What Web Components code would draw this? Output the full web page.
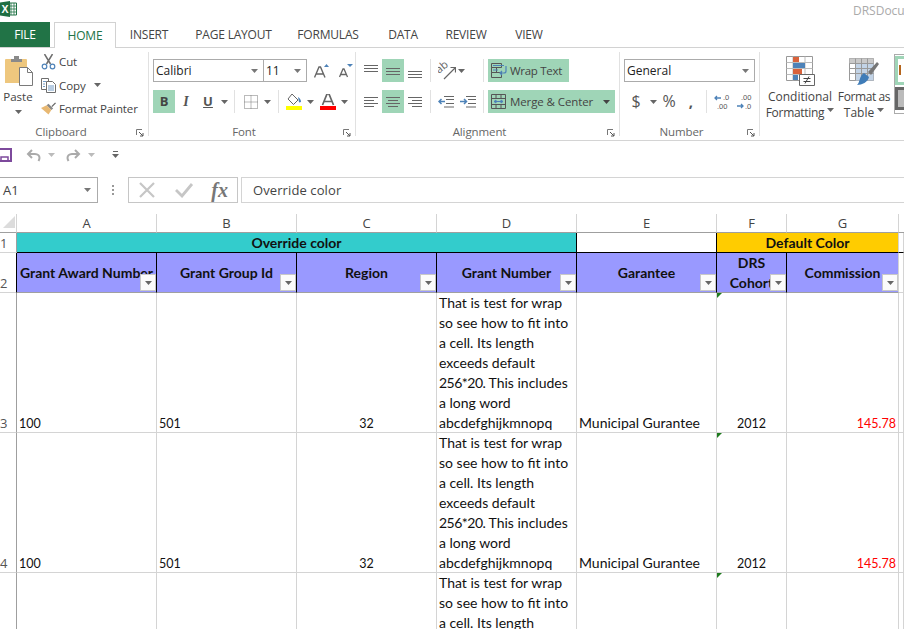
<!DOCTYPE html>
<html>
<head>
<meta charset="utf-8">
<title>Excel</title>
<style>
  html, body { margin: 0; height: 100%; overflow: hidden; background: #fff; }
  body { display: flex; flex-direction: column; width: 904px; height: 629px; font-family: "Open Sans", "Liberation Sans", sans-serif; color: #444; }
</style>
</head>
<body>
<x-titlebar></x-titlebar>
<x-tabs></x-tabs>
<x-ribbon></x-ribbon>
<x-qat></x-qat>
<x-formula-bar></x-formula-bar>
<x-sheet></x-sheet>

<script>
const caret = (color = '#666') => `<svg width="7" height="4" viewBox="0 0 7 4"><path d="M0 0h7L3.5 4z" fill="${color}"/></svg>`;

const alignLines = (rows) => `<svg width="14" height="14" viewBox="0 0 14 14" fill="none" stroke="#666" stroke-width="1">${rows.map(([x1, x2, y]) => `<path d="M${x1} ${y + .5}H${x2}"/>`).join('')}</svg>`;

const ICONS = {
  excel: `<svg width="17" height="16" viewBox="0 0 17 16"><path d="M8 2h8.500v12H8z" fill="#fff" stroke="#217346"/><path d="M11 2v12M14 2v12M8 5h8M8 8h8M8 11h8" stroke="#217346" stroke-width=".8"/><path d="M0 1.500 10 0v16L0 14.500z" fill="#1f6f43"/><text x="1.600" y="12" font-family="Liberation Sans" font-weight="700" font-size="10.500" fill="#fff">X</text></svg>`,
  paste: `<svg width="29" height="30" viewBox="0 0 29 30"><path d="M1 3h20a1 1 0 0 1 1 1v23H0V4a1 1 0 0 1 1-1z" fill="#eec77e"/><path d="M6 3h3V0h5v3h3v3H6z" fill="#8a8a8a"/><path d="M14.500 11.500h8l5 5v13h-13z" fill="#fff" stroke="#7a7a7a"/><path d="M22.500 11.500v5h5" fill="none" stroke="#7a7a7a"/></svg>`,
  cut: `<svg width="14" height="16" viewBox="0 0 14 16" fill="none"><path d="M3 0l6 10M11 0 5 10" stroke="#6e6e6e" stroke-width="1.500"/><circle cx="3" cy="12.500" r="2.300" stroke="#4d82b8" stroke-width="1.200"/><circle cx="11" cy="12.500" r="2.300" stroke="#4d82b8" stroke-width="1.200"/></svg>`,
  copy: `<svg width="15" height="15" viewBox="0 0 15 15" fill="#fff" stroke="#6e6e6e"><path d="M.5 .5h7v11h-7z"/><path d="M5.500 3.500h6l3 3v8h-9z"/><path d="M7 8h6M7 10h6M7 12h6M2 3.500h3M2 6h2M2 8.500h2" stroke="#4d82b8" stroke-width=".8"/></svg>`,
  painter: `<svg width="16" height="15" viewBox="0 0 16 15"><path d="M11 5 15 1l1 1-4 4z" fill="#666"/><path d="M8 2.500l5 5-2 1.500-5-5z" fill="#888"/><path d="M6 4l5 5-3 5-8-7z" fill="#e8b872"/></svg>`,
  grow: `<svg width="16" height="14" viewBox="0 0 16 14"><path d="M10 3l2.500-3L15 3z" fill="#4d82b8"/><path d="M.5 13.500 5 3h1.500L11 13.500M2.500 10h6.500" fill="none" stroke="#666" stroke-width="1.400"/></svg>`,
  shrink: `<svg width="14" height="14" viewBox="0 0 14 14"><path d="M8 0h6l-3 3z" fill="#4d82b8"/><path d="M.5 13 4 5h1l3.500 8M2 10.500h5" fill="none" stroke="#666" stroke-width="1.300"/></svg>`,
  borders: `<svg width="14" height="14" viewBox="0 0 14 14" fill="none" stroke="#777" stroke-dasharray="1 1"><path d="M.5 .5h13v13H.5zM7 .5v13M.5 7h13"/></svg>`,
  fill: `<svg width="16" height="16" viewBox="0 0 16 16"><path d="M6 0l6 6-4.500 4.500L2 5z" fill="#fff" stroke="#666"/><path d="M12 3c2 1 3 3 3 5l-2 .5z" fill="#4d82b8"/><path d="M0 12h16v4H0z" fill="#ffff00"/></svg>`,
  fontColor: `<svg width="16" height="16" viewBox="0 0 16 16"><path d="M2.500 11 7 0h2l4.500 11M4.500 7.500h7" fill="none" stroke="#666" stroke-width="1.700"/><path d="M0 12h16v4H0z" fill="#ff0000"/></svg>`,
  orient: `<svg width="18" height="18" viewBox="0 0 18 18" fill="none"><text transform="translate(1 12) rotate(-40)" font-family="Open Sans" font-size="11" fill="#666">ab</text><path d="M6 17 17 6M12.500 5.500H17.500V10.500" stroke="#666" stroke-width="1.200"/></svg>`,
  wrap: `<svg width="16" height="15" viewBox="0 0 16 15" fill="none"><path d="M.5 .5h10v4H.5zM.5 9.500h10v5H.5z" stroke="#555"/><path d="M.5 4.500h5v5h-5z" stroke="#555"/><path d="M2 2.500h11M2 7h5" stroke="#4d82b8"/><path d="M15 3v5c0 1-1 2-2 2H9M11 8l-2 2 2 2" stroke="#4d82b8" stroke-width="1.200"/></svg>`,
  merge: `<svg width="15" height="15" viewBox="0 0 15 15" fill="none" stroke="#555"><path d="M.5 .5h14v14H.5zM.5 4.500h14M.5 10.500h14M5 .5v4M10 .500v4M5 10.500v4M10 10.500v4"/><path d="M3 7.500h9M3 7.500l2-1.500v3zM12 7.500l-2-1.500v3z" stroke="#4d82b8"/></svg>`,
  outdent: `<svg width="16" height="12" viewBox="0 0 16 12" fill="none"><path d="M6 .5h10M8 3.500h8M8 7.500h8M6 11h10" stroke="#666"/><path d="M7 5.500H1M3.500 3 1 5.500 3.500 8" stroke="#4d82b8" stroke-width="1.500"/></svg>`,
  indent: `<svg width="16" height="12" viewBox="0 0 16 12" fill="none"><path d="M6 .5h10M8 3.500h8M8 7.500h8M6 11h10" stroke="#666"/><path d="M0 5.500h6M4 3 6.500 5.500 4 8" stroke="#4d82b8" stroke-width="1.500"/></svg>`,
  lessDec: `<svg width="18" height="16" viewBox="0 0 18 16"><path d="M7 4H1M3 2 1 4l2 2" fill="none" stroke="#4d82b8" stroke-width="1.300"/><text x="9" y="6" font-size="7.500" font-family="Liberation Sans" fill="#555">.0</text><text x="3" y="14.500" font-size="7.500" font-family="Liberation Sans" fill="#555">.00</text></svg>`,
  moreDec: `<svg width="18" height="16" viewBox="0 0 18 16"><text x="5" y="6" font-size="7.500" font-family="Liberation Sans" fill="#555">.00</text><path d="M1 12h6M5 10l2 2-2 2" fill="none" stroke="#4d82b8" stroke-width="1.300"/><text x="9" y="14.500" font-size="7.500" font-family="Liberation Sans" fill="#555">.0</text></svg>`,
  cond: `<svg width="30" height="30" viewBox="0 0 30 30"><path d="M1.500 .5h26v24h-26z" fill="#fff" stroke="#999"/><path d="M1.500 6.500h26M1.500 12.500h26M1.500 18.500h26M8 .5v24M20 .5v24" stroke="#bbb" fill="none"/><path d="M8 1h6v5H8zM8 13h9v5H8z" fill="#d9623b"/><path d="M8 7h12v5H8zM8 19h5v5H8z" fill="#4d82b8"/><path d="M14.500 18.500h15v11h-15z" fill="#fff" stroke="#666"/><path d="M18.500 22.500h7M18.500 25.500h7M24 20.500l-4 7" stroke="#444" fill="none"/></svg>`,
  table: `<svg width="30" height="30" viewBox="0 0 30 30"><path d="M.5 2.500h24v22H.5z" fill="#fff" stroke="#999"/><path d="M.5 2.500h24v5H.5z" fill="#c9c9c9"/><path d="M6.500 7.500h18v17h-18z" fill="#c2d3e6"/><path d="M.5 7.500h24M.5 12.500h24M.5 17.500h24M6.500 2.500v22M12.500 2.500v22M18.500 2.500v22" stroke="#999" fill="none"/><path d="M19 16 28 6l2 2-8 11z" fill="#777"/><path d="M15 17l5 4c-1 5-7 8-12 8 3-2 2-9 7-12z" fill="#3f7cb8"/></svg>`,
  save: `<svg width="12" height="14" viewBox="0 0 12 14" fill="none" stroke="#7d4a9c" stroke-width="2"><path d="M-3 1h14v12H-3z"/><path d="M1 9h7v4H1z" stroke-width="1.500"/></svg>`,
  undo: `<svg width="15" height="13" viewBox="0 0 15 13" fill="none" stroke="#aaa" stroke-width="2"><path d="M6 1 2 5l4 4M2 5h7c3 0 4.500 2 4.500 4 0 1-.5 2-1 3"/></svg>`,
  redo: `<svg width="15" height="13" viewBox="0 0 15 13" fill="none" stroke="#aaa" stroke-width="2"><path d="M9 1l4 4-4 4M13 5H6C3 5 1.500 7 1.500 9c0 1 .5 2 1 3"/></svg>`,
  custom: `<svg width="7" height="8" viewBox="0 0 7 8"><path d="M1 .5h5" stroke="#666"/><path d="M0 3h7L3.500 7z" fill="#666"/></svg>`,
  launcher: `<svg width="8" height="8" viewBox="0 0 8 8" fill="none" stroke="#777"><path d="M.5 6V.5H6"/><path d="M3 3l4 4M7 4v3H4" stroke="#555"/></svg>`,
  cancel: `<svg width="18" height="16" viewBox="0 0 18 16" fill="none" stroke="#c6c6c6" stroke-width="2.200"><path d="M2 1l14 14M16 1 2 15"/></svg>`,
  enter: `<svg width="20" height="16" viewBox="0 0 20 16" fill="none" stroke="#c6c6c6" stroke-width="2.800"><path d="M2 8l6 6L18 2"/></svg>`
};

class XTitlebar extends HTMLElement {
  constructor() {
    super();
    this.attachShadow({ mode: 'open' }).innerHTML = `
      <style>
        :host { display: flex; justify-content: space-between; height: 22px; flex: none; overflow: hidden; }
        .logo { padding-top: 1px; line-height: 0; }
        .doc { font-size: 12px; color: #aaa; padding-top: 2px; white-space: nowrap; width: 51px; }
      </style>
      <div class="logo">${ICONS.excel}</div>
      <div class="doc">DRSDocument</div>`;
  }
}
customElements.define('x-titlebar', XTitlebar);

class XTabs extends HTMLElement {
  constructor() {
    super();
    const tabs = [['INSERT', 66], ['PAGE LAYOUT', 103], ['FORMULAS', 86], ['DATA', 64], ['REVIEW', 62], ['VIEW', 64]];
    this.attachShadow({ mode: 'open' }).innerHTML = `
      <style>
        :host { display: flex; height: 25px; flex: none; border-bottom: 1px solid #d2d2d2; font-size: 12px; letter-spacing: -.2px; }
        div { display: flex; align-items: center; justify-content: center; box-sizing: border-box; height: 25px; }
        .file { width: 50px; background: #217346; color: #fff; margin-right: 4px; }
        .home { width: 62px; height: 26px; background: #fff; color: #217346; border: 1px solid #d2d2d2; border-bottom: 0; }
      </style>
      <div class="file">FILE</div>
      <div class="home">HOME</div>
      ${tabs.map(([t, w]) => `<div style="width:${w}px">${t}</div>`).join('')}`;
  }
}
customElements.define('x-tabs', XTabs);

// one button of the ribbon: icon plus optional text, highlighted when "on"
class XTool extends HTMLElement {
  constructor() {
    super();
    this.attachShadow({ mode: 'open' }).innerHTML = `
      <style>
        :host { display: inline-flex; align-items: center; justify-content: center; height: 23px; flex: none; box-sizing: border-box; line-height: 0; }
        :host([on]) { background: #9fd5b7; }
        ::slotted(span) { line-height: 23px; }
      </style>
      <slot></slot>`;
  }
  connectedCallback() {
    if (this.hasAttribute('w')) this.style.width = this.getAttribute('w') + 'px';
  }
}
customElements.define('x-tool', XTool);

class XCombo extends HTMLElement {
  constructor() {
    super();
    this.attachShadow({ mode: 'open' }).innerHTML = `
      <style>
        :host { display: flex; align-items: center; justify-content: space-between; box-sizing: border-box; height: 23px; flex: none; border: 1px solid #ababab; padding: 0 5px 0 2px; font-size: 12px; color: #222; background: #fff; }
      </style>
      <slot></slot>${caret('#777')}`;
  }
  connectedCallback() {
    this.style.width = this.getAttribute('w') + 'px';
  }
}
customElements.define('x-combo', XCombo);

class XSep extends HTMLElement {
  constructor() {
    super();
    this.attachShadow({ mode: 'open' }).innerHTML = `<style>:host { display: block; width: 1px; height: 23px; background: #e1e1e1; flex: none; }</style>`;
  }
}
customElements.define('x-sep', XSep);

class XGroup extends HTMLElement {
  constructor() {
    super();
    this.attachShadow({ mode: 'open' }).innerHTML = `
      <style>
        :host { display: flex; flex-direction: column; box-sizing: border-box; height: 84px; flex: none; border-right: 1px solid #e1e1e1; position: relative; }
        .body { flex: 1; min-height: 0; }
        .label { height: 15px; margin-bottom: -3px; line-height: 15px; text-align: center; font-size: 11.500px; color: #666; letter-spacing: -.1px; }
        .launch { position: absolute; right: 4px; bottom: -1px; line-height: 0; }
      </style>
      <div class="body"><slot></slot></div>
      <div class="label"></div>
      <div class="launch">${ICONS.launcher}</div>`;
  }
  connectedCallback() {
    this.style.width = this.getAttribute('w') + 'px';
    const label = this.shadowRoot.querySelector('.label');
    label.textContent = this.getAttribute('label');
    label.style.paddingRight = this.getAttribute('pad') + 'px';
  }
}
customElements.define('x-group', XGroup);

class XRibbon extends HTMLElement {
  constructor() {
    super();
    this.attachShadow({ mode: 'open' }).innerHTML = `
      <style>
        :host { display: flex; height: 93px; flex: none; box-sizing: border-box; padding-top: 4px; border-bottom: 1px solid #d4d4d4; font-size: 12px; color: #444; overflow: hidden; }
        .rows { display: flex; flex-direction: column; gap: 8px; padding-top: 7px; }
        .row { display: flex; align-items: center; height: 23px; }
        .clip { display: flex; padding: 0 0 0 2px; height: 70px; }
        .paste { width: 32px; display: flex; flex-direction: column; align-items: center; font-size: 11.500px; line-height: 16px; padding-top: 4px; margin-right: 7px; }
        .paste svg:first-child { margin: 0 0 3px 2px; }
        .paste svg:last-child { margin-top: 5px; }
        .small { display: flex; flex-direction: column; margin-top: -2px; font-size: 11.500px; letter-spacing: -.1px; }
        .small div { display: flex; align-items: center; height: 23.500px; gap: 3px; white-space: nowrap; }
        .small svg:first-child { width: 15px; }
        .big { display: flex; flex-direction: column; align-items: center; font-size: 12px; line-height: 16px; padding-top: 4px; }
        .big svg:first-child { margin-bottom: 3px; }
        .big span { white-space: nowrap; }
        .big span svg { margin-left: 3px; vertical-align: 2px; }
        .cells { display: flex; flex-direction: column; gap: 2px; box-sizing: border-box; width: 20px; height: 60px; margin: 2px 0 0 6px; padding-top: 1px; border: 1px solid #ababab; border-right: 0; }
        .c1 { box-sizing: border-box; height: 29px; border: 3px solid #9fd5b7; border-right: 0; background: #fff; padding: 6px 0 0 1px; }
        .c1 i { display: block; width: 2px; height: 10px; background: #b5651d; }
        .c2 { box-sizing: border-box; height: 23px; border: 3px solid #666; border-right: 0; background: #bbb; }
      </style>

      <x-group w="149" label="Clipboard" pad="26">
        <div class="clip">
          <div class="paste">${ICONS.paste}Paste<svg width="7" height="4" viewBox="0 0 7 4"><path d="M0 0h7L3.500 4z" fill="#666"/></svg></div>
          <div class="small">
            <div>${ICONS.cut}Cut</div>
            <div>${ICONS.copy}Copy&nbsp;&nbsp;${caret()}</div>
            <div>${ICONS.painter}Format Painter</div>
          </div>
        </div>
      </x-group>

      <x-group w="207" label="Font" pad="16">
        <div class="rows" style="padding-left:4px">
          <div class="row">
            <x-combo w="111">Calibri</x-combo><x-combo w="44" style="margin-left:-1px">11</x-combo>
            <x-tool w="26" style="margin-left:2px">${ICONS.grow}</x-tool>
            <x-tool w="22">${ICONS.shrink}</x-tool>
          </div>
          <div class="row">
            <x-tool w="22" on style="font:700 13px 'Open Sans';color:#444"><span>B</span></x-tool>
            <x-tool w="22" style="font:italic 700 14px 'Liberation Serif';color:#555"><span>I</span></x-tool>
            <x-tool w="22" style="font:700 13px 'Open Sans';color:#555"><span style="text-decoration:underline">U</span></x-tool>
            <x-tool w="10">${caret()}</x-tool>
            <x-sep style="margin:0 8px 0 5px"></x-sep>
            <x-tool w="16">${ICONS.borders}</x-tool>
            <x-tool w="16">${caret()}</x-tool>
            <x-sep style="margin:0 7px 0 3px"></x-sep>
            <x-tool w="16">${ICONS.fill}</x-tool>
            <x-tool w="17">${caret()}</x-tool>
            <x-tool w="16" style="margin-left:1px">${ICONS.fontColor}</x-tool>
            <x-tool w="16">${caret()}</x-tool>
          </div>
        </div>
      </x-group>

      <x-group w="264" label="Alignment" pad="16">
        <div class="rows" style="padding-left:4px">
          <div class="row">
            <x-tool w="22">${alignLines([[0, 14, 1], [0, 14, 4], [0, 14, 7]])}</x-tool>
            <x-tool w="22" on>${alignLines([[0, 14, 4], [0, 14, 7], [0, 14, 10]])}</x-tool>
            <x-tool w="22">${alignLines([[0, 14, 7], [0, 14, 10], [0, 14, 13]])}</x-tool>
            <x-sep style="margin:0 7px 0 4px"></x-sep>
            <x-tool w="18">${ICONS.orient}</x-tool>
            <x-tool w="11">${caret()}</x-tool>
            <x-sep style="margin:0 4px 0 16px"></x-sep>
            <x-tool w="81" on style="justify-content:flex-start;padding-left:3px;gap:3px;font-size:11.500px;letter-spacing:-.3px">${ICONS.wrap}<span>Wrap Text</span></x-tool>
          </div>
          <div class="row">
            <x-tool w="22">${alignLines([[0, 14, 2], [0, 10, 5], [0, 14, 8], [0, 10, 11]])}</x-tool>
            <x-tool w="22" on>${alignLines([[0, 14, 2], [2, 12, 5], [0, 14, 8], [2, 12, 11]])}</x-tool>
            <x-tool w="22">${alignLines([[0, 14, 2], [4, 14, 5], [0, 14, 8], [4, 14, 11]])}</x-tool>
            <x-sep style="margin:0 7px 0 4px"></x-sep>
            <x-tool w="16">${ICONS.outdent}</x-tool>
            <x-tool w="16" style="margin-left:6px">${ICONS.indent}</x-tool>
            <x-sep style="margin:0 4px 0 7px"></x-sep>
            <x-tool w="127" on style="justify-content:flex-start;padding:0 5px 0 3px;gap:4px;font-size:11.500px;letter-spacing:-.1px">${ICONS.merge}<span>Merge &amp; Center</span>${caret('#444').replace('<svg', '<svg style="margin-left:auto"')}</x-tool>
          </div>
        </div>
      </x-group>

      <x-group w="140" label="Number" pad="16">
        <div class="rows" style="padding-left:4px">
          <div class="row"><x-combo w="131">General</x-combo></div>
          <div class="row">
            <x-tool w="22" style="font:16px 'Open Sans';color:#555;margin-left:1px"><span>$</span></x-tool>
            <x-tool w="12">${caret()}</x-tool>
            <x-tool w="20" style="font:16px 'Open Sans';color:#555"><span>%</span></x-tool>
            <x-tool w="20" style="font:700 15px 'Open Sans';color:#555;margin-left:2px"><span>,</span></x-tool>
            <x-sep style="margin:0 7px 0 5px"></x-sep>
            <x-tool w="18">${ICONS.lessDec}</x-tool>
            <x-tool w="18" style="margin-left:4px">${ICONS.moreDec}</x-tool>
          </div>
        </div>
      </x-group>

      <div style="display:flex">
        <div class="big" style="width:80px">${ICONS.cond}<span>Conditional</span><span style="letter-spacing:-.3px">Formatting${caret()}</span></div>
        <div class="big" style="width:48px">${ICONS.table}<span style="letter-spacing:-.4px">Format as</span><span>Table${caret()}</span></div>
        <div class="cells"><div class="c1"><i></i></div><div class="c2"></div></div>
      </div>`;
  }
}
customElements.define('x-ribbon', XRibbon);

class XQat extends HTMLElement {
  constructor() {
    super();
    this.attachShadow({ mode: 'open' }).innerHTML = `
      <style>
        :host { display: flex; align-items: center; height: 28px; flex: none; line-height: 0; }
        div { display: flex; align-items: center; }
      </style>
      <div style="width:26px">${ICONS.save}</div>
      <div style="width:22px">${ICONS.undo}</div>
      <div style="width:18px">${caret('#bbb')}</div>
      <div style="width:22px">${ICONS.redo}</div>
      <div style="width:24px">${caret('#bbb')}</div>
      <div>${ICONS.custom}</div>`;
  }
}
customElements.define('x-qat', XQat);

class XFormulaBar extends HTMLElement {
  constructor() {
    super();
    this.attachShadow({ mode: 'open' }).innerHTML = `
      <style>
        :host { display: flex; align-items: stretch; height: 26px; margin: 8px 0 11px; flex: none; font-size: 13px; color: #444; }
        .name { width: 98px; box-sizing: border-box; border: 1px solid #ababab; border-left: 0; display: flex; align-items: center; justify-content: space-between; padding: 0 6px 0 3px; }
        .dots { width: 30px; display: flex; align-items: center; justify-content: center; }
        .fx { width: 110px; box-sizing: border-box; border: 1px solid #c6c6c6; display: flex; align-items: center; justify-content: space-between; padding: 0 9px 0 9px; }
        .fx span { font: italic 700 20px "Liberation Serif", serif; color: #777; }
        .input { flex: 1; margin-left: 3px; border: 1px solid #d4d4d4; border-right: 0; padding-left: 11px; display: flex; align-items: center; letter-spacing: .1px; }
      </style>
      <div class="name">A1${caret('#777')}</div>
      <div class="dots"><svg width="3" height="11" viewBox="0 0 3 11" fill="#999"><path d="M0 0h2v2H0zM0 4h2v2H0zM0 8h2v2H0z"/></svg></div>
      <div class="fx">${ICONS.cancel}${ICONS.enter}<span>fx</span></div>
      <div class="input">Override color</div>`;
  }
}
customElements.define('x-formula-bar', XFormulaBar);

class XCell extends HTMLElement {
  constructor() {
    super();
    this.attachShadow({ mode: 'open' }).innerHTML = `
      <style>
        :host { display: flex; align-items: flex-end; box-sizing: border-box; position: relative; overflow: hidden; min-width: 0; border-right: 1px solid #d4d4d4; border-bottom: 1px solid #d4d4d4; padding: 0 2px; font: 14px/20px Lato, "Open Sans", sans-serif; color: #111; white-space: nowrap; }
        span { margin-bottom: -1px; }
        :host([center]) { justify-content: center; text-align: center; }
        :host([right]) { justify-content: flex-end; color: #f00; }
        :host([num]) { font-size: 12.500px; }
        :host([num]) span { margin-bottom: -2px; }
        :host([col]) { align-items: center; justify-content: center; font-size: 13px; color: #444; border-bottom-color: #9f9f9f; font-family: "Open Sans", sans-serif; }
        :host([rownum]) { padding: 0; color: #555; font-family: "Open Sans", sans-serif; font-size: 13px; border-right-color: #9f9f9f; }
        :host([head]) { background: #9999ff; font-weight: 700; align-items: center; justify-content: center; text-align: center; border-right-color: #000; border-bottom-color: #a0a0a0; color: #111; }
        :host([top]) { align-items: center; justify-content: center; font-weight: 700; border-bottom-color: #000; border-right-color: #000; }
        :host([col]) span, :host([head]) span, :host([top]) span { margin-bottom: 0; }
        .filter { display: none; position: absolute; right: 0; bottom: 1px; box-sizing: border-box; width: 16px; height: 17px; background: #fbfbfb; border: 1px solid #c8c8c8; align-items: center; justify-content: center; }
        :host([head]) .filter { display: flex; }
        .flag { display: none; position: absolute; left: 0; top: 0; width: 0; height: 0; border-top: 5px solid #1e7b1e; border-right: 5px solid transparent; }
        :host([flag]) .flag { display: block; }
      </style>
      <span><slot></slot></span>
      <div class="filter">${caret('#666')}</div>
      <div class="flag"></div>`;
  }
}
customElements.define('x-cell', XCell);

const WRAP = 'That is test for wrap<br>so see how to fit into<br>a cell. Its length<br>exceeds default<br><b style="font-weight:400;letter-spacing:-.5px">256*20.</b> This includes<br>a long word<br>abcdefghijkmnopq';

class XSheet extends HTMLElement {
  constructor() {
    super();
    this.attachShadow({ mode: 'open' }).innerHTML = `
      <style>
        :host { display: grid; flex: none; height: 415px; overflow: hidden; grid-template-columns: 17px repeat(5, 140px) 70px 112px 1fr; grid-template-rows: 19px 20px 40px 140px 140px 140px; }
      </style>
      <slot></slot>`;
  }
  connectedCallback() {
    const row = (n) => `
      <x-cell rownum>${n}</x-cell>
      <x-cell num>100</x-cell><x-cell num>501</x-cell><x-cell center num>32</x-cell>
      <x-cell>${WRAP}</x-cell>
      <x-cell>Municipal Gurantee</x-cell>
      <x-cell center flag num>2012</x-cell>
      <x-cell right num>145.78</x-cell><x-cell></x-cell>`;
    this.innerHTML = `
      <x-cell col style="padding:0"><svg width="12" height="12" viewBox="0 0 12 12" style="margin-left:1px"><path d="M0 12 12 0v12z" fill="#dcdcdc"/></svg></x-cell>
      ${['A', 'B', 'C', 'D', 'E', 'F', 'G'].map((c) => `<x-cell col>${c}</x-cell>`).join('')}<x-cell col style="border-right:0"></x-cell>
      <x-cell rownum>1</x-cell>
      <x-cell top style="grid-column:span 4;background:#33cccc">Override color</x-cell>
      <x-cell top style="background:#fff"></x-cell>
      <x-cell top style="grid-column:span 2;background:#ffcc00;border-right-color:#d4d4d4">Default Color</x-cell>
      <x-cell style="border-bottom-color:#000"></x-cell>
      <x-cell rownum style="border-right-color:#000">2</x-cell>
      <x-cell head>Grant Award Number</x-cell>
      <x-cell head>Grant Group Id</x-cell>
      <x-cell head>Region</x-cell>
      <x-cell head>Grant Number</x-cell>
      <x-cell head>Garantee</x-cell>
      <x-cell head>DRS<br>Cohort</x-cell>
      <x-cell head style="border-right-color:#d4d4d4">Commission</x-cell>
      <x-cell></x-cell>
      ${row(3)}${row(4)}${row(5)}`;
  }
}
customElements.define('x-sheet', XSheet);
</script>
</body>
</html>
